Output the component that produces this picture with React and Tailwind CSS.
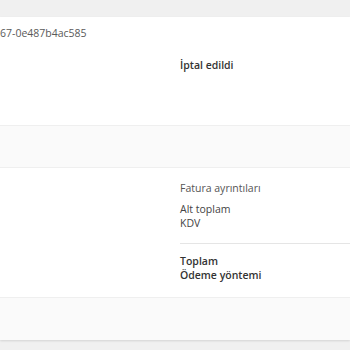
import React from 'react';

export default function App() {
    return (
        <div className="h-[350px] w-[350px] overflow-hidden bg-[#f0f0f0] pt-[17px] font-['Open_Sans',sans-serif] text-[10.5px] leading-[14px]">
            <div className="bg-white shadow-[0_1px_2px_rgba(0,0,0,0.12)]">
                <div className="grid h-[109px] grid-cols-[180px_1fr] border-b border-[#efefef]">
                    <div className="pt-[9px] text-[#5a5a5a]">67-0e487b4ac585</div>
                    <div className="pt-[41px] font-semibold text-[#333]">İptal edildi</div>
                </div>
                <div className="h-[42px] border-b border-[#efefef] bg-[#fafafa]" />
                <div className="grid h-[130px] grid-cols-[180px_1fr] border-b border-[#efefef]">
                    <div />
                    <div className="pt-[13px]">
                        <div className="text-[#555]">Fatura ayrıntıları</div>
                        <div className="mt-[7px] text-[#444]">
                            <div>Alt toplam</div>
                            <div>KDV</div>
                        </div>
                        <div className="mt-[13px] border-t border-[#e5e5e5] pt-[10px] font-semibold text-[#333]">
                            <div>Toplam</div>
                            <div>Ödeme yöntemi</div>
                        </div>
                    </div>
                </div>
                <div className="h-[42px] bg-[#fafafa]" />
            </div>
        </div>
    );
}
